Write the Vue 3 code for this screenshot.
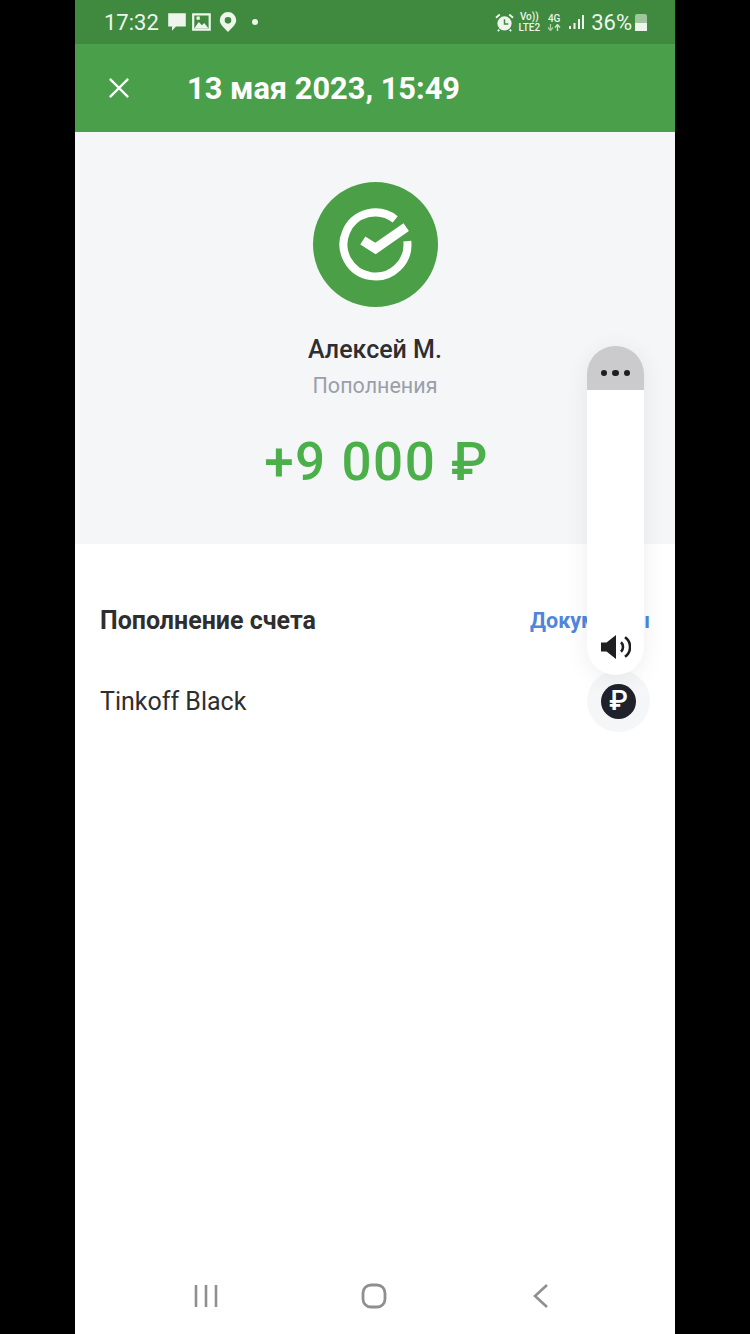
<script setup>
const statusIcons = ["chat", "image", "pin"]
</script>

<template>
  <div class="phone">
    <div class="status">
      <div class="status__left">
        <span class="status__time">17:32</span>
        <svg v-for="icon in statusIcons" :key="icon" class="status__icon" viewBox="0 0 20 20">
          <path v-if="icon === 'chat'" d="M2 2h16v12H9l-3.500 4v-4H2z" fill="#edf5ec" />
          <g v-else-if="icon === 'image'">
            <path fill-rule="evenodd" d="M1 2h17v16H1zM3 4v12h13V4z" fill="#edf5ec" />
            <path d="M3 16l4-6 3 3 2-2 4 5z M5 5h3v3H5z" fill="#edf5ec" />
          </g>
          <path v-else fill-rule="evenodd" d="M10 1a7.500 7.500 0 0 1 7.500 7.500c0 4-4 7-7.500 10.500C6.500 15.500 2.500 12.500 2.500 8.500A7.500 7.500 0 0 1 10 1zm0 4.500a3 3 0 1 0 0 6 3 3 0 0 0 0-6z" fill="#edf5ec" />
        </svg>
        <span class="status__dot"></span>
      </div>
      <div class="status__right">
        <svg class="status__alarm" viewBox="0 0 20 20">
          <circle cx="10" cy="11" r="7.500" fill="#edf5ec" />
          <path d="M10 6.500V11.500H14" fill="none" stroke="#3f8a3f" stroke-width="1.500" />
          <path d="M1 5l4-3.500M19 5l-4-3.500M4.500 17.500L3 19M15.500 17.500L17 19" stroke="#edf5ec" stroke-width="2" />
        </svg>
        <div class="status__net">
          <span>Vo))</span>
          <span>LTE2</span>
        </div>
        <div class="status__net">
          <span>4G</span>
          <svg viewBox="0 0 14 7" width="14" height="7">
            <path d="M3.500 0v6M1 3.500L3.500 6.500 6 3.500" fill="none" stroke="#a9cfa7" stroke-width="1.300" />
            <path d="M10.500 7V1M8 3.500L10.500 .5 13 3.500" fill="none" stroke="#cfe4ce" stroke-width="1.300" />
          </svg>
        </div>
        <svg class="status__signal" viewBox="0 0 16 16">
          <path d="M1 12h2v3H1zM5.500 9h2v6h-2zM10 5h2v10h-2zM14 1h2v14h-2z" fill="#edf5ec" />
        </svg>
        <span class="status__battery-text">36%</span>
        <div class="status__battery"><div class="status__battery-fill"></div></div>
      </div>
    </div>

    <div class="topbar">
      <svg class="topbar__close" viewBox="0 0 24 24">
        <path d="M2 2l20 20M22 2L2 22" stroke="#fff" stroke-width="2.500" fill="none" />
      </svg>
      <h1 class="topbar__title">13 мая 2023, 15:49</h1>
    </div>

    <div class="hero">
      <svg class="hero__logo" viewBox="0 0 125 125">
        <circle cx="62.500" cy="62.500" r="62.500" fill="#4b9f47" />
        <path d="M82.200 37.300A32 32 0 1 0 94.300 59.100" fill="none" stroke="#fff" stroke-width="8" />
        <path d="M49.800 58.500L62.500 66.500 93.200 45.200" fill="none" stroke="#fff" stroke-width="9.500" />
      </svg>
      <div class="hero__name">Алексей М.</div>
      <div class="hero__type">Пополнения</div>
      <div class="hero__sum">+9 000 ₽</div>
    </div>

    <div class="details">
      <div class="details__row details__row--head">
        <span class="details__heading">Пополнение счета</span>
        <span class="details__link">Документы</span>
      </div>
      <div class="details__row">
        <span class="details__card">Tinkoff Black</span>
        <span class="details__halo"><span class="details__coin">₽</span></span>
      </div>
    </div>

    <div class="nav">
      <svg class="nav__icon" viewBox="0 0 26 26">
        <path d="M3 2v22M13 2v22M23 2v22" stroke="#8f8f8f" stroke-width="2.600" fill="none" />
      </svg>
      <svg class="nav__icon" viewBox="0 0 26 26">
        <rect x="2" y="2" width="22" height="22" rx="8" stroke="#8f8f8f" stroke-width="2.800" fill="none" />
      </svg>
      <svg class="nav__icon" viewBox="0 0 26 26">
        <path d="M18 2L6 13l12 11" stroke="#8f8f8f" stroke-width="2.600" fill="none" />
      </svg>
    </div>

    <div class="volume">
      <div class="volume__top">
        <span></span><span></span><span></span>
      </div>
      <svg class="volume__icon" viewBox="0 0 30 24">
        <path d="M0 7.500h5.500L15 0v24l-9.500-7.500H0z" fill="#1f1f22" />
        <path d="M20 7.300a6.500 6.500 0 0 1 0 9.400M24 2.200a12 12 0 0 1 0 19.600" fill="none" stroke="#1f1f22" stroke-width="2.600" />
      </svg>
    </div>
  </div>
</template>

<style>
html, body {
  background: #000;
}
</style>

<style scoped>
.phone {
  position: relative;
  display: flex;
  flex-direction: column;
  width: 600px;
  height: 1334px;
  margin: 0 auto;
  overflow: hidden;
  background: #fff;
  font-family: Roboto, "Liberation Sans", sans-serif;
}

.status {
  display: flex;
  justify-content: space-between;
  align-items: center;
  height: 44px;
  padding: 0 28px 0 29px;
  background: #3f8a3f;
  color: #edf5ec;
}

.status__left,
.status__right {
  display: flex;
  align-items: center;
}

.status__time {
  margin-right: 7px;
  font-size: 22px;
}

.status__icon {
  width: 22px;
  height: 22px;
  margin-right: 3.500px;
}

.status__dot {
  width: 6px;
  height: 6px;
  margin-left: 9.500px;
  border-radius: 50%;
  background: #edf5ec;
}

.status__right {
  gap: 7px;
}

.status__alarm {
  width: 19px;
  height: 19px;
  margin-right: -2px;
}

.status__net {
  display: flex;
  flex-direction: column;
  align-items: center;
  font-size: 10px;
  font-weight: 500;
  line-height: 11px;
}

.status__signal {
  width: 16px;
  height: 16px;
}

.status__battery-text {
  font-size: 22px;
}

.status__battery {
  position: relative;
  width: 12px;
  height: 17px;
  margin-left: -4px;
  border-radius: 2px;
  background: #9fc69d;
}

.status__battery-fill {
  position: absolute;
  right: 0;
  bottom: 0;
  left: 0;
  height: 8px;
  background: #edf5ec;
}

.topbar {
  display: flex;
  align-items: center;
  height: 88px;
  padding-left: 33px;
  background: #4a9f4a;
}

.topbar__close {
  width: 22px;
  height: 22px;
}

.topbar__title {
  margin: 0 0 0 57px;
  color: #fff;
  font-size: 30.800px;
  font-weight: 700;
  white-space: nowrap;
}

.hero {
  display: flex;
  flex-direction: column;
  align-items: center;
  height: 412px;
  padding-top: 50px;
  box-sizing: border-box;
  background: #f5f6f8;
}

.hero__logo {
  width: 125px;
  height: 125px;
}

.hero__name {
  margin-top: 25px;
  color: #2e2e30;
  font-size: 25px;
  font-weight: 500;
  line-height: 36px;
}

.hero__type {
  margin-top: 1px;
  color: #9a9fa8;
  font-size: 21.500px;
  line-height: 34px;
}

.hero__sum {
  margin-top: 29px;
  margin-left: 3px;
  color: #4cb04a;
  font-size: 53px;
  font-weight: 500;
  letter-spacing: 1.500px;
  line-height: 60px;
}

.details {
  display: flex;
  flex-direction: column;
  gap: 20px;
  padding: 46px 25px 0;
}

.details__row {
  display: flex;
  justify-content: space-between;
  align-items: center;
  height: 62px;
}

.details__row--head {
  height: 60px;
}

.details__heading {
  color: #2e2e30;
  font-size: 25px;
  font-weight: 700;
}

.details__link {
  color: #4f86dc;
  font-size: 21.500px;
  font-weight: 700;
}

.details__card {
  color: #2e2e30;
  font-size: 25px;
}

.details__halo {
  display: flex;
  justify-content: center;
  align-items: center;
  width: 63px;
  height: 62px;
  border-radius: 50%;
  background: #f5f6f8;
}

.details__coin {
  display: flex;
  justify-content: center;
  align-items: center;
  width: 35px;
  height: 35px;
  border-radius: 50%;
  background: #1f222b;
  color: #fff;
  font-size: 27px;
  font-weight: 500;
}

.nav {
  display: flex;
  justify-content: space-between;
  align-items: center;
  margin-top: auto;
  padding: 0 120px 25px 118px;
}

.nav__icon {
  width: 26px;
  height: 26px;
}

.volume {
  position: absolute;
  top: 346px;
  left: 512px;
  display: flex;
  flex-direction: column;
  justify-content: space-between;
  width: 57px;
  height: 329px;
  border-radius: 28px;
  background: #fff;
  box-shadow: 0 4px 24px rgba(0, 0, 0, 0.07);
  overflow: hidden;
}

.volume__top {
  display: flex;
  justify-content: center;
  align-items: center;
  gap: 5px;
  height: 44px;
  padding-top: 10px;
  box-sizing: border-box;
  background: #cbcbcd;
}

.volume__top span {
  width: 6.500px;
  height: 6.500px;
  border-radius: 50%;
  background: #1f1f22;
}

.volume__icon {
  width: 30px;
  height: 24px;
  margin: 0 auto 16px;
}
</style>
